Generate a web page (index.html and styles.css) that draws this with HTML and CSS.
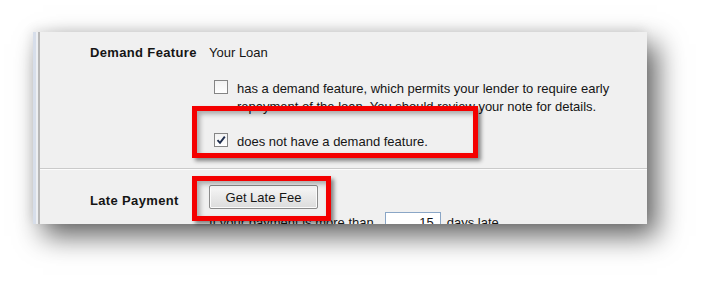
FILE: index.html
```html
<!DOCTYPE html>
<html>
<head lang="en">
    <meta charset="UTF-8">
    <title>Loan Estimate - Demand Feature</title>
    <link rel="stylesheet" href="styles.css">
</head>
<body>
<div class="stage">
    <div class="window">
        <div class="rail"></div>
        <div class="content">
            <div class="group group_first">
                <div class="field_label">Demand Feature</div>
                <div class="field_body">
                    <div class="lead">Your Loan</div>
                    <div class="option option_first">
                        <span class="box"></span>
                        <span class="option_text">has a demand feature, which permits your lender to require early repayment of the loan. You should review your note for details.</span>
                    </div>
                    <div class="option option_second">
                        <span class="box">
                            <svg class="tick" width="12" height="12" viewBox="0 0 12 12">
                                <path d="M2.5 6.2 L5 8.8 L9.8 2.6" fill="none" stroke="#1d2c4c" stroke-width="1.9"/>
                            </svg>
                        </span>
                        <span class="option_text">does not have a demand feature.</span>
                    </div>
                </div>
            </div>
            <div class="group group_second">
                <div class="field_label field_label_button">Late Payment</div>
                <div class="field_body">
                    <button class="btn" type="button">Get Late Fee</button>
                    <div class="fee_row">
                        <span>If your payment is more than</span>
                        <input class="days" value="15"/>
                        <span>days late.</span>
                    </div>
                </div>
            </div>
        </div>
    </div>
    <div class="callout callout_demand"></div>
    <div class="callout callout_fee"></div>
</div>
</body>
</html>
```

FILE: styles.css
```css
html, body {
    margin: 0;
    background: #fff;
}
body {
    font-family: "Liberation Sans", Arial, sans-serif;
    font-size: 13px;
    color: #151515;
}
.stage {
    position: relative;
    width: 712px;
    height: 290px;
    padding: 32px 0 0 33px;
    box-sizing: border-box;
    overflow: hidden;
}
.window {
    width: 614px;
    height: 192px;
    display: flex;
    background: #f0f0f0;
    overflow: hidden;
    box-shadow: 10px 12px 26px rgba(0, 0, 0, 0.62), -2px -3px 10px rgba(0, 0, 0, 0.07);
}
.rail {
    width: 7px;
    flex: none;
    background: linear-gradient(to right, #d7deea 0, #d7deea 3px, #edeff2 3px, #edeff2 5px, #b8b8b8 5px, #b8b8b8 7px);
}
.content {
    flex: 1;
}

.group {
    display: flex;
    padding-left: 50px;
}
.group_first {
    padding-top: 13px;
    padding-bottom: 17px;
    border-bottom: 1px solid #cacaca;
}
.group_second {
    padding-top: 15px;
    border-top: 1px solid #fcfcfc;
}
.field_label {
    width: 119px;
    flex: none;
    font-weight: bold;
    letter-spacing: 0.35px;
    line-height: 15px;
}
.field_label_button {
    padding-top: 8px;
}
.field_body {
    flex: 1;
}

.lead {
    line-height: 15px;
}
.option {
    display: flex;
    align-items: flex-start;
    line-height: 18px;
}
.option_first {
    margin-top: 20px;
}
.option_second {
    margin-top: 17px;
}
.box {
    width: 14px;
    height: 14px;
    flex: none;
    margin-left: 5px;
    margin-right: 9px;
    box-sizing: border-box;
    border: 1px solid #858585;
    background: linear-gradient(#f2f2f2, #fff);
    display: flex;
    align-items: center;
    justify-content: center;
}
.option_text {
    padding-right: 20px;
}

.btn {
    display: block;
    width: 109px;
    height: 24px;
    padding: 0;
    font-family: inherit;
    font-size: 13px;
    color: #151515;
    border: 1px solid #8b8b8b;
    border-radius: 2px;
    background: linear-gradient(#f7f7f7, #e9e9e9 50%, #dcdcdc);
    box-shadow: inset 0 0 0 1px #fbfbfb;
}
.fee_row {
    display: flex;
    align-items: center;
    gap: 6px;
    margin-top: 3px;
    line-height: 15px;
}
.days {
    width: 56px;
    height: 20px;
    margin-left: 5px;
    box-sizing: border-box;
    border: 1px solid #8aa6c6;
    padding: 0 6px;
    text-align: right;
    font-family: inherit;
    font-size: 13px;
    color: #151515;
    background: #fff;
}

/* red annotation frames laid over the screenshot */
.callout {
    position: absolute;
    box-sizing: border-box;
    border: 5px solid #f40000;
    box-shadow: 3px 3px 4px rgba(0, 0, 0, 0.45), inset 3px 3px 5px rgba(0, 0, 0, 0.3);
}
.callout_demand {
    left: 192px;
    top: 106px;
    width: 286px;
    height: 52px;
}
.callout_fee {
    left: 192px;
    top: 176px;
    width: 139px;
    height: 45px;
}
```
